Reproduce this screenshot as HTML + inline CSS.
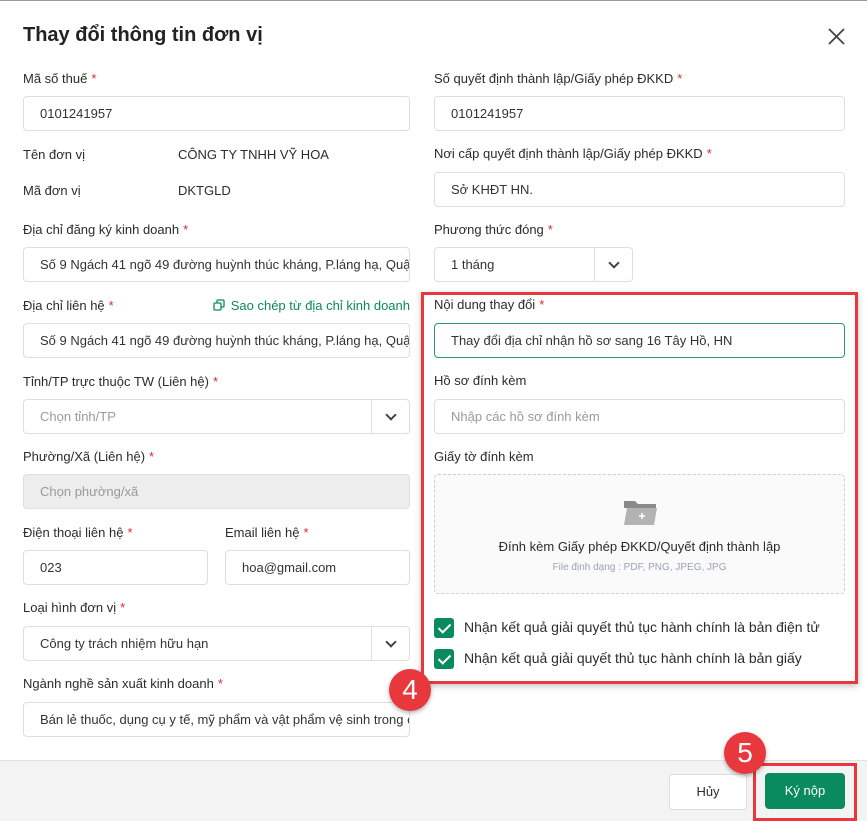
<!DOCTYPE html>
<html><head><meta charset="utf-8"><style>
*{box-sizing:border-box;margin:0;padding:0}
body{width:867px;height:821px;background:#fff;font-family:"Liberation Sans","Noto Sans CJK SC",sans-serif;font-size:13px;color:#2b2b2b;position:relative;overflow:hidden}
.a{position:absolute}
.lbl{position:absolute;font-size:13px;color:#2b2b2b;white-space:nowrap}
.lbl b{color:#e0282e;font-weight:normal;margin-left:4px}
.in{position:absolute;height:35px;border:1px solid #dedede;border-radius:4px;padding-left:16px;line-height:33px;font-size:13px;color:#333;white-space:nowrap;overflow:hidden;background:#fff}
.ph{color:#9a9a9a}
.sel .dd{position:absolute;right:0;top:0;width:38px;height:33px;border-left:1px solid #dedede}
.sel .dd:after{content:"";position:absolute;left:15px;top:11px;width:6px;height:6px;border-right:2px solid #444;border-bottom:2px solid #444;transform:rotate(45deg)}
.cb{position:absolute;width:20px;height:20px;background:#0a8a5f;border-radius:3px}
.cb:after{content:"";position:absolute;left:7px;top:3px;width:5px;height:10px;border-right:2px solid #fff;border-bottom:2px solid #fff;transform:rotate(45deg)}
.badge{position:absolute;width:42px;height:42px;border-radius:50%;background:#e8383d;color:#fff;font-size:28px;text-align:center;line-height:42px;box-shadow:0 2px 4px rgba(0,0,0,.3)}
</style></head><body>
<div class="a" style="left:0;top:0;width:867px;height:1px;background:#9a9a9a"></div>
<div class="a" style="left:23px;top:24px;font-size:20px;font-weight:bold;color:#222">Thay đổi thông tin đơn vị</div>
<svg class="a" style="left:828px;top:28px" width="17" height="17"><path d="M1 1L16 16M16 1L1 16" stroke="#444" stroke-width="1.8"/></svg>

<div class="lbl" style="left:23px;top:71px">Mã số thuế<b>*</b></div>
<div class="in" style="left:23px;top:96px;width:387px">0101241957</div>
<div class="lbl" style="left:23px;top:147px">Tên đơn vị</div>
<div class="lbl" style="left:178px;top:147px">CÔNG TY TNHH VỸ HOA</div>
<div class="lbl" style="left:23px;top:183px">Mã đơn vị</div>
<div class="lbl" style="left:178px;top:183px">DKTGLD</div>
<div class="lbl" style="left:23px;top:222px">Địa chỉ đăng ký kinh doanh<b>*</b></div>
<div class="in" style="left:23px;top:247px;width:387px;padding-right:10px">Số 9 Ngách 41 ngõ 49 đường huỳnh thúc kháng, P.láng hạ, Quận</div>
<div class="lbl" style="left:23px;top:298px">Địa chỉ liên hệ<b>*</b></div>
<div class="lbl" style="right:457px;top:298px;color:#0a8a5f"><svg width="12" height="12" style="vertical-align:-1px;margin-right:6px"><rect x="1" y="4" width="7" height="7" rx="1" fill="none" stroke="#0a8a5f" stroke-width="1.3"/><path d="M4 4V2a1 1 0 0 1 1-1h5a1 1 0 0 1 1 1v5a1 1 0 0 1-1 1H8" fill="none" stroke="#0a8a5f" stroke-width="1.3"/></svg>Sao chép từ địa chỉ kinh doanh</div>
<div class="in" style="left:23px;top:323px;width:387px">Số 9 Ngách 41 ngõ 49 đường huỳnh thúc kháng, P.láng hạ, Quận</div>
<div class="lbl" style="left:23px;top:374px">Tỉnh/TP trực thuộc TW (Liên hệ)<b>*</b></div>
<div class="in sel ph" style="left:23px;top:399px;width:387px">Chọn tỉnh/TP<div class="dd"></div></div>
<div class="lbl" style="left:23px;top:449px">Phường/Xã (Liên hệ)<b>*</b></div>
<div class="in ph" style="left:23px;top:474px;width:387px;background:#ededed">Chọn phường/xã</div>
<div class="lbl" style="left:23px;top:525px">Điện thoại liên hệ<b>*</b></div>
<div class="lbl" style="left:225px;top:525px">Email liên hệ<b>*</b></div>
<div class="in" style="left:23px;top:550px;width:185px">023</div>
<div class="in" style="left:225px;top:550px;width:185px">hoa@gmail.com</div>
<div class="lbl" style="left:23px;top:600px">Loại hình đơn vị<b>*</b></div>
<div class="in sel" style="left:23px;top:626px;width:387px">Công ty trách nhiệm hữu hạn<div class="dd"></div></div>
<div class="lbl" style="left:23px;top:676px">Ngành nghề sản xuất kinh doanh<b>*</b></div>
<div class="in" style="left:23px;top:702px;width:387px">Bán lẻ thuốc, dụng cụ y tế, mỹ phẩm và vật phẩm vệ sinh trong c</div>

<div class="lbl" style="left:434px;top:71px">Số quyết định thành lập/Giấy phép ĐKKD<b>*</b></div>
<div class="in" style="left:434px;top:96px;width:411px">0101241957</div>
<div class="lbl" style="left:434px;top:146px">Nơi cấp quyết định thành lập/Giấy phép ĐKKD<b>*</b></div>
<div class="in" style="left:434px;top:172px;width:411px">Sở KHĐT HN.</div>
<div class="lbl" style="left:434px;top:222px">Phương thức đóng<b>*</b></div>
<div class="in sel" style="left:434px;top:247px;width:199px">1 tháng<div class="dd"></div></div>

<div class="a" style="left:421px;top:292px;width:437px;height:392px;border:3px solid #e8383d;box-shadow:0 2px 6px rgba(0,0,0,.25)"></div>
<div class="lbl" style="left:434px;top:297px">Nội dung thay đổi<b>*</b></div>
<div class="in" style="left:434px;top:323px;width:411px;border-color:#2a9a70">Thay đổi địa chỉ nhận hồ sơ sang 16 Tây Hồ, HN</div>
<div class="lbl" style="left:434px;top:373px">Hồ sơ đính kèm</div>
<div class="in ph" style="left:434px;top:399px;width:411px">Nhập các hồ sơ đính kèm</div>
<div class="lbl" style="left:434px;top:449px">Giấy tờ đính kèm</div>
<div class="a" style="left:434px;top:474px;width:411px;height:120px;border:1px dashed #cfcfcf;border-radius:4px;background:#fafafa"></div>
<svg class="a" style="left:623px;top:499px" width="35" height="27"><path d="M1 2h11l3 3h18v4H1z" fill="#8a8a8a"/><path d="M4 9h30l-3 17H1z" fill="#b3b3b3"/><path d="M16 17h6M19 14v6" stroke="#fff" stroke-width="1.6"/></svg>
<div class="lbl" style="left:434px;width:411px;text-align:center;top:539px">Đính kèm Giấy phép ĐKKD/Quyết định thành lập</div>
<div class="lbl" style="left:434px;width:411px;text-align:center;top:562px;font-size:10px;color:#9aa3b5">File định dạng : PDF, PNG, JPEG, JPG</div>
<div class="cb" style="left:434px;top:618px"></div>
<div class="lbl" style="left:464px;top:619px;font-size:14px">Nhận kết quả giải quyết thủ tục hành chính là bản điện tử</div>
<div class="cb" style="left:434px;top:649px"></div>
<div class="lbl" style="left:464px;top:650px;font-size:14px">Nhận kết quả giải quyết thủ tục hành chính là bản giấy</div>

<div class="a" style="left:0;top:760px;width:867px;height:61px;background:#f3f3f3;border-top:1px solid #e2e2e2"></div>
<div class="a" style="left:669px;top:774px;width:78px;height:36px;background:#fff;border:1px solid #ddd;border-radius:4px;text-align:center;line-height:34px">Hủy</div>
<div class="a" style="left:753px;top:763px;width:104px;height:58px;border:3px solid #e8383d"></div>
<div class="a" style="left:765px;top:773px;width:80px;height:36px;background:#0a8a5f;border-radius:4px;color:#fff;text-align:center;line-height:36px">Ký nộp</div>
<div class="badge" style="left:389px;top:669px">4</div>
<div class="badge" style="left:724px;top:732px">5</div>
</body></html>
